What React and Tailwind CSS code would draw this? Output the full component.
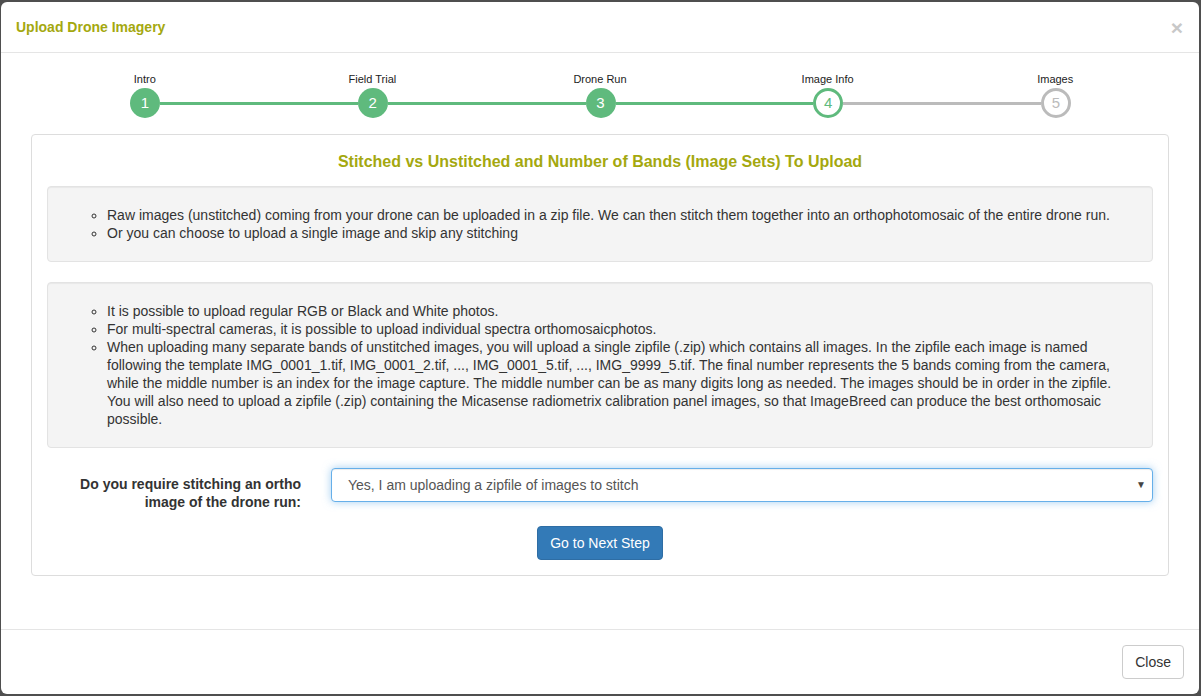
import React from 'react'

const steps = [
  { n: 1, label: 'Intro', state: 'done' },
  { n: 2, label: 'Field Trial', state: 'done' },
  { n: 3, label: 'Drone Run', state: 'done' },
  { n: 4, label: 'Image Info', state: 'active' },
  { n: 5, label: 'Images', state: 'todo' },
]

function Circle({ n, state }) {
  if (state === 'done') {
    return (
      <div className="w-[30px] h-[30px] shrink-0 rounded-full bg-[#5fba7d] text-white flex items-center justify-center text-[15px]">
        {n}
      </div>
    )
  }
  if (state === 'active') {
    return (
      <div className="w-[30px] h-[30px] shrink-0 rounded-full bg-white border-[3px] border-[#5fba7d] text-[#5fba7d] flex items-center justify-center text-[15px]">
        {n}
      </div>
    )
  }
  return (
    <div className="w-[30px] h-[30px] shrink-0 rounded-full bg-white border-[3px] border-[#bbbbbb] text-[#bbbbbb] flex items-center justify-center text-[15px]">
      {n}
    </div>
  )
}

function Stepper() {
  return (
    <div className="pt-[20px]">
      <div className="grid grid-cols-5 text-[11px] leading-[13px] text-[#222]">
        {steps.map(s => (
          <div key={s.n} className="text-center">{s.label}</div>
        ))}
      </div>
      <div className="flex items-center mt-[2px] pl-[99px] pr-[98px]">
        {steps.map((s, i) => (
          <React.Fragment key={s.n}>
            <Circle n={s.n} state={s.state} />
            {i < steps.length - 1 && (
              <div className={`flex-1 h-[3px] ${i < 3 ? 'bg-[#5fba7d]' : 'bg-[#bbbbbb]'}`} />
            )}
          </React.Fragment>
        ))}
      </div>
    </div>
  )
}

export default function App() {
  return (
    <div className="w-[1201px] h-[696px] bg-[#4f4f4f] pt-[2px] pl-[1px] overflow-hidden" style={{ fontFamily: '"Liberation Sans", Arial, sans-serif' }}>
      <div className="w-[1198px] h-[692px] bg-white rounded-[6px] flex flex-col text-[14px] leading-[18px] text-[#333]">
        {/* header */}
        <div className="h-[51px] border-b border-[#e5e5e5] px-[15px] flex items-center justify-between">
          <h4 className="font-bold text-[14px] text-[#a4a80f]">Upload Drone Imagery</h4>
          <span className="text-[21px] font-bold text-[#c8c8c8] leading-none pr-[1px]">×</span>
        </div>

        {/* body */}
        <div className="flex-1 px-[30px]">
          <Stepper />

          <div className="mt-[16px] border border-[#dddddd] rounded-[4px] px-[15px] pb-[15px]">
            <h3 className="text-center font-bold text-[16px] leading-[20px] text-[#a4a80f] pt-[17px] pb-[14px]">
              Stitched vs Unstitched and Number of Bands (Image Sets) To Upload
            </h3>

            <div className="bg-[#f4f4f4] border border-[#e3e3e3] rounded-[4px] p-[19px] shadow-[inset_0_1px_1px_rgba(0,0,0,0.05)]">
              <ul className="list-[circle] pl-[40px]">
                <li>Raw images (unstitched) coming from your drone can be uploaded in a zip file. We can then stitch them together into an orthophotomosaic of the entire drone run.</li>
                <li>Or you can choose to upload a single image and skip any stitching</li>
              </ul>
            </div>

            <div className="mt-[20px] bg-[#f4f4f4] border border-[#e3e3e3] rounded-[4px] p-[19px] shadow-[inset_0_1px_1px_rgba(0,0,0,0.05)]">
              <ul className="list-[circle] pl-[40px]">
                <li>It is possible to upload regular RGB or Black and White photos.</li>
                <li>For multi-spectral cameras, it is possible to upload individual spectra orthomosaicphotos.</li>
                <li>When uploading many separate bands of unstitched images, you will upload a single zipfile (.zip) which contains all images. In the zipfile each image is named following the template IMG_0001_1.tif, IMG_0001_2.tif, ..., IMG_0001_5.tif, ..., IMG_9999_5.tif. The final number represents the 5 bands coming from the camera, while the middle number is an index for the image capture. The middle number can be as many digits long as needed. The images should be in order in the zipfile. You will also need to upload a zipfile (.zip) containing the Micasense radiometrix calibration panel images, so that ImageBreed can produce the best orthomosaic possible.</li>
              </ul>
            </div>

            <div className="mt-[20px] flex gap-[30px]">
              <label className="w-[254px] text-right font-bold pt-[7px]">
                Do you require stitching an ortho image of the drone run:
              </label>
              <div className="flex-1 h-[34px] border border-[#66afe9] rounded-[4px] bg-white shadow-[inset_0_1px_1px_rgba(0,0,0,0.075),0_0_8px_rgba(102,175,233,0.6)] flex items-center justify-between pl-[16px] pr-[6px] text-[#555]">
                <span>Yes, I am uploading a zipfile of images to stitch</span>
                <span className="text-[10px] text-[#444]">▼</span>
              </div>
            </div>

            <div className="mt-[15px] flex justify-center">
              <button className="h-[34px] px-[12px] bg-[#337ab7] border border-[#2e6da4] rounded-[4px] text-white text-[14px]">
                Go to Next Step
              </button>
            </div>
          </div>
        </div>

        {/* footer */}
        <div className="border-t border-[#e5e5e5] p-[15px] flex justify-end">
          <button className="h-[34px] px-[12px] bg-white border border-[#cccccc] rounded-[4px] text-[#333] text-[14px]">
            Close
          </button>
        </div>
      </div>
    </div>
  )
}
